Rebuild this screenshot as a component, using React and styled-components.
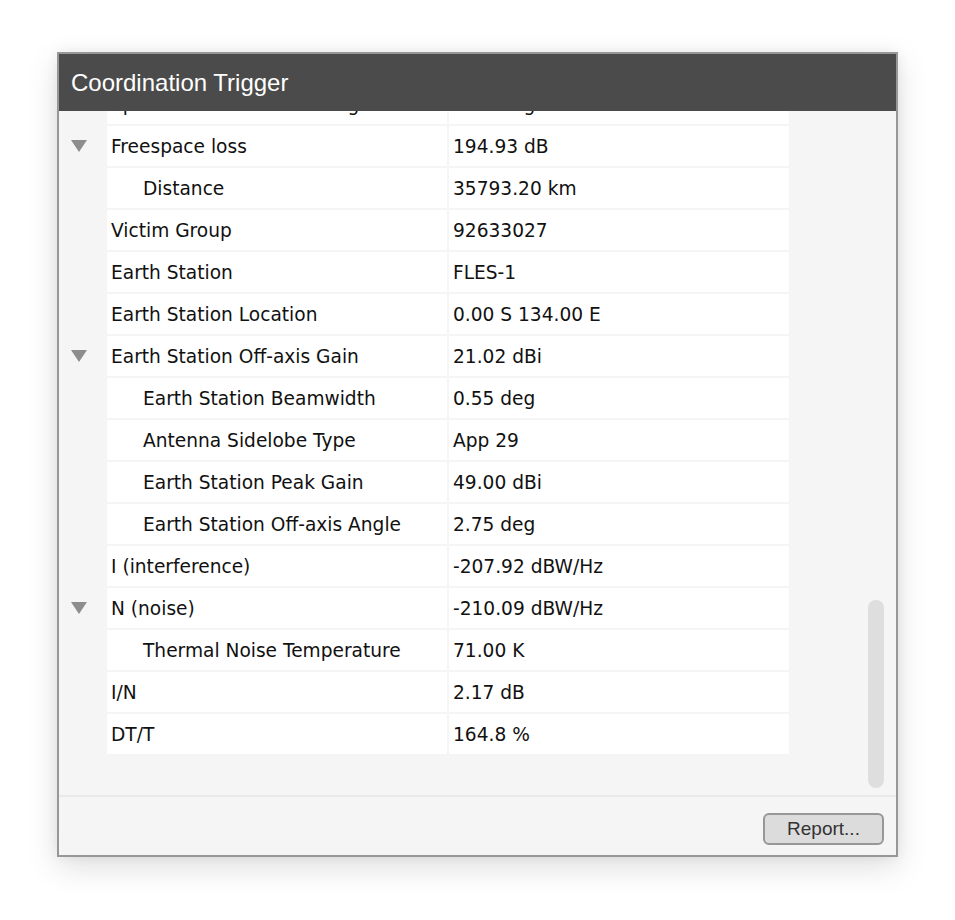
import { useEffect, useRef } from "react";
import styled, { createGlobalStyle } from "styled-components";

const GlobalStyle = createGlobalStyle`
    body{
        margin: 0;
        background: #fff;
    }
`

const Page = styled.div`
    padding: 52px 0 0 57px;
    height: 920px;
    box-sizing: border-box;
`

const Window = styled.div`
    width: 841px;
    height: 805px;
    box-sizing: border-box;
    border: 2px solid #979797;
    display: flex;
    flex-direction: column;
    background: #f5f5f5;
    box-shadow: 0 10px 30px rgba(0, 0, 0, 0.13), 0 0 12px rgba(0, 0, 0, 0.06);
`

const TitleBar = styled.div`
    height: 57px;
    flex: none;
    display: flex;
    align-items: center;
    padding-left: 12px;
    background: #4b4b4b;
    color: #fff;
    font-family: "Liberation Sans", Arial, sans-serif;
    font-size: 24px;
`

const Body = styled.div`
    position: relative;
    flex: 1;
    min-height: 0;
`

const Scroller = styled.div`
    height: 100%;
    overflow-y: auto;
    scrollbar-width: none;
    &::-webkit-scrollbar{
        display: none;
    }
`

const Table = styled.div`
    display: flex;
    flex-direction: column;
    gap: 2px;
    padding: 0 0 41px 0;
`

const Row = styled.div`
    display: grid;
    grid-template-columns: 46px 340px 340px;
    column-gap: 2px;
    height: 40px;
`

const Gutter = styled.div`
    display: flex;
    align-items: center;
    padding-left: 12px;
    margin-right: -2px;
    svg{
        display: block;
    }
`

const Cell = styled.div`
    display: flex;
    align-items: center;
    background: #fff;
    padding-left: ${p => p.$indent ? 36 : 4}px;
    font-family: "DejaVu Sans", Verdana, sans-serif;
    font-size: 18.6px;
    color: #111;
    white-space: nowrap;
`

const Thumb = styled.div`
    position: absolute;
    right: 12px;
    bottom: 7px;
    width: 16px;
    height: 188px;
    border-radius: 8px;
    background: #dedede;
`

const Footer = styled.div`
    height: 58px;
    flex: none;
    border-top: 2px solid #e9e9e9;
    display: flex;
    align-items: center;
    justify-content: flex-end;
    padding-right: 12px;
`

const Button = styled.button`
    width: 121px;
    height: 32px;
    margin-top: 5px;
    border: 2px solid #979797;
    border-radius: 6px;
    background: #dcdcdc;
    color: #333;
    font-family: "Liberation Sans", Arial, sans-serif;
    font-size: 19px;
    padding: 0;
`

const rows = [
    { name: "Interfering Group", value: "92633011" },
    { name: "Space Station", value: "GEO-134E" },
    { name: "Space Station Location", value: "0.00 N 134.00 E" },
    { name: "EIRP Density", value: "-13.00 dBW/Hz", open: true },
    { name: "Power Density", value: "-62.00 dBW/Hz", indent: true },
    { name: "Space Station Peak Gain", value: "49.00 dBi", indent: true },
    { name: "Space Station Off-axis Gain", value: "49.00 dBi", open: true },
    { name: "Space Station Off-axis Angle", value: "9.25 deg" },
    { name: "Freespace loss", value: "194.93 dB", open: true },
    { name: "Distance", value: "35793.20 km", indent: true },
    { name: "Victim Group", value: "92633027" },
    { name: "Earth Station", value: "FLES-1" },
    { name: "Earth Station Location", value: "0.00 S 134.00 E" },
    { name: "Earth Station Off-axis Gain", value: "21.02 dBi", open: true },
    { name: "Earth Station Beamwidth", value: "0.55 deg", indent: true },
    { name: "Antenna Sidelobe Type", value: "App 29", indent: true },
    { name: "Earth Station Peak Gain", value: "49.00 dBi", indent: true },
    { name: "Earth Station Off-axis Angle", value: "2.75 deg", indent: true },
    { name: "I (interference)", value: "-207.92 dBW/Hz" },
    { name: "N (noise)", value: "-210.09 dBW/Hz", open: true },
    { name: "Thermal Noise Temperature", value: "71.00 K", indent: true },
    { name: "I/N", value: "2.17 dB" },
    { name: "DT/T", value: "164.8 %" },
]

function Arrow(){
    return <svg width="16" height="12" viewBox="0 0 16 12">
        <path d="M0 0H16L8 12Z" fill="#8d8d8d"/>
    </svg>
}

export default function App(){
    const ref = useRef(null)

    useEffect(() => {
        // the list sits scrolled to its end
        if(ref.current) ref.current.scrollTop = ref.current.scrollHeight
    }, [])

    return <Page>
        <GlobalStyle/>
        <Window>
            <TitleBar>Coordination Trigger</TitleBar>
            <Body>
                <Scroller ref={ref}>
                    <Table>
                        {rows.map((r, i) => <Row key={i}>
                            <Gutter>{r.open && <Arrow/>}</Gutter>
                            <Cell $indent={r.indent}>{r.name}</Cell>
                            <Cell>{r.value}</Cell>
                        </Row>)}
                    </Table>
                </Scroller>
                <Thumb/>
            </Body>
            <Footer>
                <Button>Report...</Button>
            </Footer>
        </Window>
    </Page>
}
